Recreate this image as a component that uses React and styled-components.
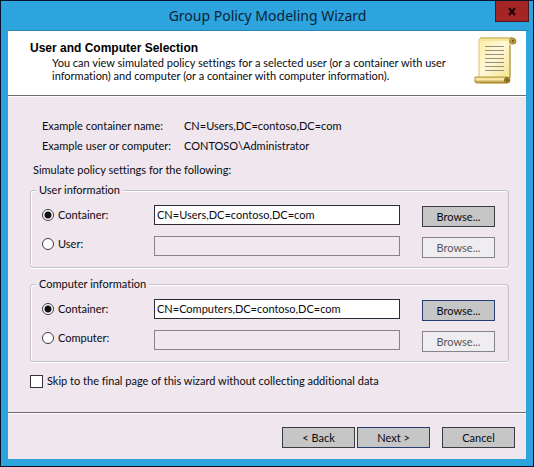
import React, { useState } from "react";
import styled, { createGlobalStyle } from "styled-components";

const Global = createGlobalStyle`
  * { box-sizing: border-box; }
  html, body { margin: 0; }
  body, button, input {
    font-family: Lato, "Liberation Sans", sans-serif;
    font-size: 11px;
    line-height: 14px;
    font-variant-ligatures: none;
    color: #0a0a10;
  }
`;

const Dialog = styled.main`
  min-height: 100vh;
  display: flex;
  flex-direction: column;
  border: 1px solid #06142c;
  background: #2ea4df;
  padding: 0 7px 7px;
`;

const TitleBar = styled.header`
  display: grid;
  grid-template-columns: 32px 1fr 34px;
  height: 30px;
  flex: none;
  margin-right: -3px;
  border-bottom: 1px solid #2b83b4;
`;

const Title = styled.h1`
  grid-column: 2;
  margin: 0;
  text-align: center;
  font: 14px/30px "Noto Sans", "Open Sans", sans-serif;
  color: #0b2236;
`;

const CloseButton = styled.button`
  display: grid;
  place-items: center;
  height: 21px;
  padding: 0;
  border: 1px solid #4a1420;
  border-top: 0;
  background: #a32625;
`;

const Content = styled.form`
  flex: 1;
  display: flex;
  flex-direction: column;
  background: #efe6ee;
`;

const Banner = styled.section`
  display: flex;
  justify-content: space-between;
  min-height: 65px;
  padding: 6px 8px 0 22px;
  background: #fff;
  border-bottom: 1px solid #6d6d6d;
`;

const BannerText = styled.div`
  padding-top: 4px;
`;

const Heading = styled.h2`
  margin: 0;
  font: bold 12px/15px "Liberation Sans", Arial, sans-serif;
  color: #000;
`;

const Description = styled.p`
  margin: 0 0 0 22px;
  max-width: 400px;
  line-height: 13px;
`;

const Body = styled.div`
  flex: 1;
  padding: 22px 17px 0 22px;
  border-top: 1px solid #fff;
`;

const Examples = styled.dl`
  display: grid;
  grid-template-columns: 142px 1fr;
  row-gap: 6px;
  margin: 0 0 10px;
  padding-left: 12px;
`;

const Term = styled.dt``;
const Value = styled.dd`
  margin: 0;
`;

const Intro = styled.p`
  margin: 0 0 6px;
  padding-left: 3px;
`;

const Group = styled.fieldset`
  min-width: 0;
  margin: 0 0 9px;
  padding: 8px 14px 9px 11px;
  border: 1px solid #c1c0cd;
  border-radius: 3px;
  box-shadow: inset 1px 1px #fff, 0 1px #fff;
`;

const Legend = styled.legend`
  margin-left: -6px;
  padding: 0 3px;
  background: #efe6ee;
`;

const Row = styled.div`
  display: grid;
  grid-template-columns: 112px minmax(0, 246px) 73px;
  justify-content: start;
  align-items: start;

  & + & { margin-top: 9px; }
  & + & > label { height: 16px; }
  & > button { margin-left: 22px; margin-top: 1px; }
`;

const Choice = styled.label`
  display: flex;
  align-items: center;
  gap: 4px;
  height: 20px;
`;

const Radio = styled.input.attrs({ type: "radio" })`
  appearance: none;
  width: 12px;
  height: 12px;
  margin: 0 0 1px;
  border: 1px solid #3c3c44;
  border-radius: 50%;
  background: #fff;

  &:checked { background: radial-gradient(circle, #111 0 3px, #fff 4px); }
`;

const Field = styled.input.attrs({ type: "text" })`
  width: 100%;
  height: 20px;
  padding: 0 2px 1px;
  border: 1px solid #2c2c34;
  border-radius: 0;
  background: #fff;

  &:disabled {
    border-color: #85838c;
    background: #efe8ef;
  }
`;

const Button = styled.button`
  width: 73px;
  height: 21px;
  padding: 0;
  border: 1px solid ${(p) => (p.$focused ? "#263f73" : "#3b3b43")};
  background: #c6c6c6;

  &:disabled {
    border-color: #85838c;
    background: #efedf0;
    color: #58565c;
  }
`;

const Skip = styled.label`
  display: flex;
  align-items: center;
  gap: 4px;
  margin-top: 12px;
`;

const Checkbox = styled.input.attrs({ type: "checkbox" })`
  appearance: none;
  width: 13px;
  height: 13px;
  margin: 0;
  border: 1px solid #33333b;
  background: #fff;

  &:checked { box-shadow: inset 0 0 0 2px #fff; background: #222; }
`;

const Actions = styled.footer`
  display: flex;
  justify-content: flex-end;
  gap: 2px;
  padding: 14px 11px 11px;
  border-top: 1px solid #6d6d6d;
  box-shadow: inset 0 1px #fff;

  & > :last-child { margin-left: 10px; }
`;

function Scroll() {
  return (
    <svg width="46" height="48" viewBox="0 0 46 48" aria-hidden="true">
      <defs>
        <linearGradient id="paper" x1="0" y1="0" x2="1" y2="1">
          <stop offset="0" stopColor="#fdeea4" />
          <stop offset="0.45" stopColor="#fff8d6" />
          <stop offset="1" stopColor="#f3df7c" />
        </linearGradient>
        <linearGradient id="roll" x1="0" y1="0" x2="0" y2="1">
          <stop offset="0" stopColor="#d8bd59" />
          <stop offset="0.35" stopColor="#fff5b8" />
          <stop offset="1" stopColor="#a88122" />
        </linearGradient>
      </defs>
      <path d="M9 1H40Q37 3 38 8V40Q37 45 33 46H8Q6 44 7 40V5Q6 2 9 1Z" fill="url(#paper)" stroke="#d8c272" />
      <path d="M38 8V40Q38 44 35 46" fill="none" stroke="#a58c3d" />
      <path d="M9 1H41V4H9Q7 3 9 1Z" fill="#f6e79c" />
      <path d="M8 1H41" stroke="#c9ae50" />
      <path d="M38 6Q37 1 40 1Q44 1 44 4.500Q44 7 41 7Q39 7 38 6Z" fill="#cfb04a" stroke="#947a2c" />
      <circle cx="41" cy="4" r="1.500" fill="#806019" />
      <path d="M3 40H35Q38 41 38 43Q38 46 35 46H4Q2 45 3 42Z" fill="url(#roll)" stroke="#b49840" />
      <circle cx="35" cy="43" r="2.500" fill="#b69231" stroke="#806019" />
      <circle cx="35" cy="43" r="1" fill="#5f4305" />
      <path d="M13 9.500H32M13 13.500H32M13 17.500H32M13 21.500H32M13 25.500H32M13 29.500H32M13 33.500H32" stroke="#968e82" />
    </svg>
  );
}

function InfoGroup({ title, name, other, initial, focused }) {
  const [choice, setChoice] = useState("Container");
  const [text, setText] = useState(initial);
  const [alt, setAlt] = useState("");
  const rows = [
    ["Container", text, setText],
    [other, alt, setAlt],
  ];
  return (
    <Group>
      <Legend>{title}</Legend>
      {rows.map(([label, value, change]) => (
        <Row key={label}>
          <Choice>
            <Radio name={name} checked={choice === label} onChange={() => setChoice(label)} />
            {label}:
          </Choice>
          <Field
            aria-label={`${title}: ${label}`}
            value={value}
            disabled={choice !== label}
            onChange={(e) => change(e.target.value)}
          />
          <Button type="button" disabled={choice !== label} $focused={focused}>
            Browse...
          </Button>
        </Row>
      ))}
    </Group>
  );
}

export default function App() {
  return (
    <>
      <Global />
      <Dialog>
        <TitleBar>
          <Title>Group Policy Modeling Wizard</Title>
          <CloseButton type="button" aria-label="Close">
            <svg width="10" height="9" viewBox="0 0 10 9" aria-hidden="true">
              <path d="M2 1L8 8M8 1L2 8" stroke="#1c0508" strokeWidth="2" />
            </svg>
          </CloseButton>
        </TitleBar>
        <Content onSubmit={(e) => e.preventDefault()}>
          <Banner>
            <BannerText>
              <Heading>User and Computer Selection</Heading>
              <Description>
                You can view simulated policy settings for a selected user (or a container with user
                information) and computer (or a container with computer information).
              </Description>
            </BannerText>
            <Scroll />
          </Banner>
          <Body>
            <Examples>
              <Term>Example container name:</Term>
              <Value>CN=Users,DC=contoso,DC=com</Value>
              <Term>Example user or computer:</Term>
              <Value>CONTOSO\Administrator</Value>
            </Examples>
            <Intro>Simulate policy settings for the following:</Intro>
            <InfoGroup
              title="User information"
              name="user-source"
              other="User"
              initial="CN=Users,DC=contoso,DC=com"
            />
            <InfoGroup
              title="Computer information"
              name="computer-source"
              other="Computer"
              initial="CN=Computers,DC=contoso,DC=com"
              focused
            />
            <Skip>
              <Checkbox />
              Skip to the final page of this wizard without collecting additional data
            </Skip>
          </Body>
          <Actions>
            <Button type="button">&lt; Back</Button>
            <Button type="submit" $focused>Next &gt;</Button>
            <Button type="button">Cancel</Button>
          </Actions>
        </Content>
      </Dialog>
    </>
  );
}
